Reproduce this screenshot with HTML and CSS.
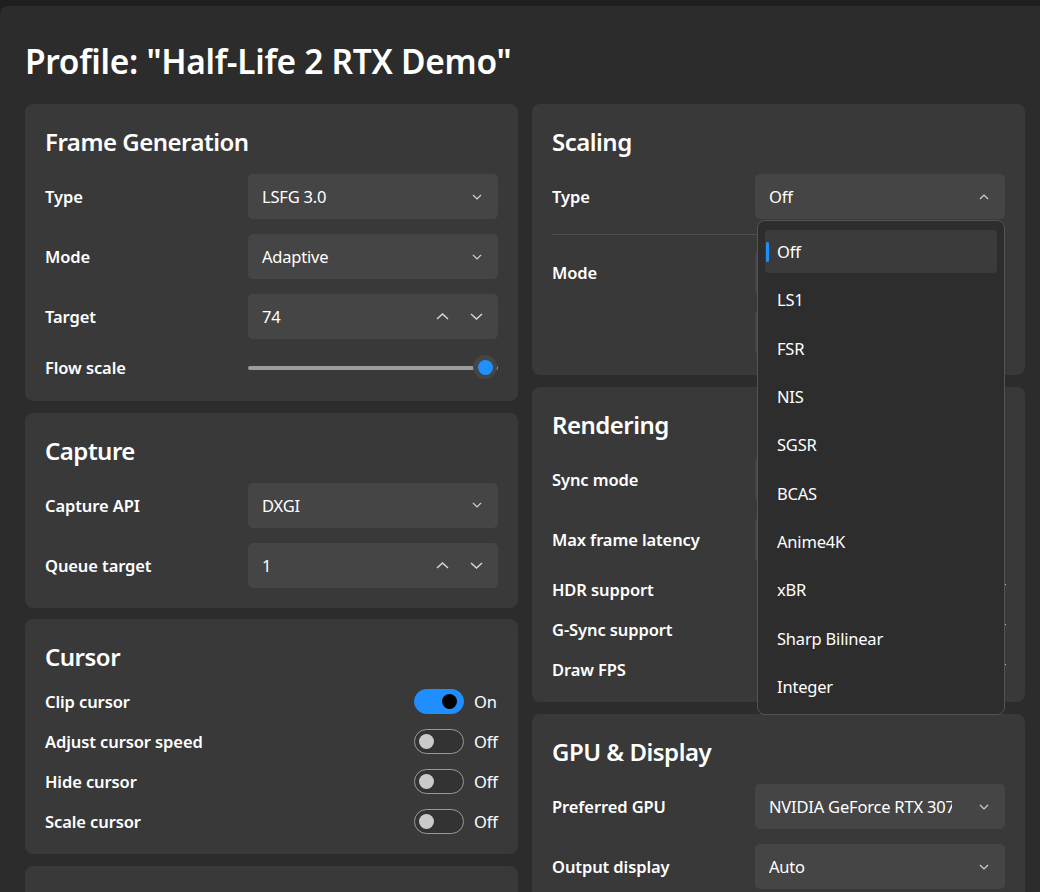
FILE: index.html
```html
<!DOCTYPE html>
<html lang="en">
<head>
<meta charset="utf-8">
<title>Profile</title>
<link rel="stylesheet" href="styles.css">
</head>
<body>
<div class="app">
  <h1 class="title">Profile: "Half-Life 2 RTX Demo"</h1>
  <div class="columns">
    <div class="col">
      <section class="card">
        <h2>Frame Generation</h2>
        <div class="rows">
          <div class="row"><span class="label">Type</span>
            <div class="select"><span class="value">LSFG 3.0</span>
              <svg class="chev" viewBox="0 0 10 6"><path d="M1 1L5 5L9 1"/></svg></div></div>
          <div class="row"><span class="label">Mode</span>
            <div class="select"><span class="value">Adaptive</span>
              <svg class="chev" viewBox="0 0 10 6"><path d="M1 1L5 5L9 1"/></svg></div></div>
          <div class="row"><span class="label">Target</span>
            <div class="select number"><span class="value">74</span>
              <svg class="chev big" viewBox="0 0 13 7"><path d="M1 6L6.5 1L12 6"/></svg>
              <svg class="chev big" viewBox="0 0 13 7"><path d="M1 1L6.5 6L12 1"/></svg></div></div>
          <div class="row slim"><span class="label">Flow scale</span>
            <div class="slider"><div class="track"></div><div class="thumb"><span></span></div></div></div>
        </div>
      </section>
      <section class="card">
        <h2>Capture</h2>
        <div class="rows">
          <div class="row"><span class="label">Capture API</span>
            <div class="select"><span class="value">DXGI</span>
              <svg class="chev" viewBox="0 0 10 6"><path d="M1 1L5 5L9 1"/></svg></div></div>
          <div class="row"><span class="label">Queue target</span>
            <div class="select number"><span class="value">1</span>
              <svg class="chev big" viewBox="0 0 13 7"><path d="M1 6L6.5 1L12 6"/></svg>
              <svg class="chev big" viewBox="0 0 13 7"><path d="M1 1L6.5 6L12 1"/></svg></div></div>
        </div>
      </section>
      <section class="card">
        <h2>Cursor</h2>
        <div class="rows">
          <div class="row toggle-row"><span class="label">Clip cursor</span>
            <div class="switch-wrap"><span class="switch on"><span class="knob"></span></span><span class="state">On</span></div></div>
          <div class="row toggle-row"><span class="label">Adjust cursor speed</span>
            <div class="switch-wrap"><span class="switch"><span class="knob"></span></span><span class="state">Off</span></div></div>
          <div class="row toggle-row"><span class="label">Hide cursor</span>
            <div class="switch-wrap"><span class="switch"><span class="knob"></span></span><span class="state">Off</span></div></div>
          <div class="row toggle-row"><span class="label">Scale cursor</span>
            <div class="switch-wrap"><span class="switch"><span class="knob"></span></span><span class="state">Off</span></div></div>
        </div>
      </section>
      <section class="card">
        <h2>Miscellaneous</h2>
      </section>
    </div>
    <div class="col">
      <section class="card">
        <h2>Scaling</h2>
        <div class="rows">
          <div class="row"><span class="label">Type</span>
            <div class="select open"><span class="value">Off</span>
              <svg class="chev" viewBox="0 0 10 6"><path d="M1 5L5 1L9 5"/></svg>
              <ul class="popup">
                <li class="item selected">Off</li>
                <li class="item">LS1</li>
                <li class="item">FSR</li>
                <li class="item">NIS</li>
                <li class="item">SGSR</li>
                <li class="item">BCAS</li>
                <li class="item">Anime4K</li>
                <li class="item">xBR</li>
                <li class="item">Sharp Bilinear</li>
                <li class="item">Integer</li>
              </ul>
            </div></div>
          <hr class="sep">
          <div class="row top"><span class="label">Mode</span>
            <div class="stack">
              <div class="select"><span class="value">Custom</span>
                <svg class="chev" viewBox="0 0 10 6"><path d="M1 1L5 5L9 1"/></svg></div>
              <div class="select number"><span class="value">1.00</span>
                <svg class="chev big" viewBox="0 0 13 7"><path d="M1 6L6.5 1L12 6"/></svg>
                <svg class="chev big" viewBox="0 0 13 7"><path d="M1 1L6.5 6L12 1"/></svg></div>
            </div></div>
        </div>
      </section>
      <section class="card">
        <h2>Rendering</h2>
        <div class="rows">
          <div class="row"><span class="label">Sync mode</span>
            <div class="select"><span class="value">Default</span>
              <svg class="chev" viewBox="0 0 10 6"><path d="M1 1L5 5L9 1"/></svg></div></div>
          <div class="row"><span class="label">Max frame latency</span>
            <div class="select number"><span class="value">1</span>
              <svg class="chev big" viewBox="0 0 13 7"><path d="M1 6L6.5 1L12 6"/></svg>
              <svg class="chev big" viewBox="0 0 13 7"><path d="M1 1L6.5 6L12 1"/></svg></div></div>
          <div class="row toggle-row"><span class="label">HDR support</span>
            <div class="switch-wrap"><span class="switch"><span class="knob"></span></span><span class="state">Off</span></div></div>
          <div class="row toggle-row"><span class="label">G-Sync support</span>
            <div class="switch-wrap"><span class="switch"><span class="knob"></span></span><span class="state">Off</span></div></div>
          <div class="row toggle-row"><span class="label">Draw FPS</span>
            <div class="switch-wrap"><span class="switch"><span class="knob"></span></span><span class="state">Off</span></div></div>
        </div>
      </section>
      <section class="card">
        <h2>GPU &amp; Display</h2>
        <div class="rows">
          <div class="row"><span class="label">Preferred GPU</span>
            <div class="select"><span class="value clip">NVIDIA GeForce RTX 3070</span>
              <svg class="chev" viewBox="0 0 10 6"><path d="M1 1L5 5L9 1"/></svg></div></div>
          <div class="row"><span class="label">Output display</span>
            <div class="select"><span class="value">Auto</span>
              <svg class="chev" viewBox="0 0 10 6"><path d="M1 1L5 5L9 1"/></svg></div></div>
        </div>
      </section>
    </div>
  </div>
</div>
</body>
</html>
```

FILE: styles.css
```css
html, body {
  margin: 0;
  height: 100%;
  overflow: hidden;
}
body {
  background: #1f1f1f;
  font-family: "Noto Sans", "Open Sans", sans-serif;
  color: #ffffff;
}
.app {
  margin-top: 6px;
  height: calc(100% - 6px);
  background: #2c2c2c;
  border-top-left-radius: 8px;
  padding: 0 15px 0 25px;
  box-sizing: border-box;
  overflow: hidden;
}
.title {
  margin: 0 0 20px;
  padding-top: 33px;
  font-size: 33.5px;
  line-height: 45px;
  font-weight: 600;
  letter-spacing: -0.3px;
  white-space: nowrap;
}
.columns {
  display: grid;
  grid-template-columns: 493px 493px;
  column-gap: 14px;
}
.col {
  display: flex;
  flex-direction: column;
  gap: 12px;
}
.col:first-child {
  gap: 11.5px;
}
.card {
  background: #393939;
  border-radius: 8px;
  padding: 20px;
}
.card h2 {
  margin: 0 0 14px;
  font-size: 24px;
  line-height: 36px;
  font-weight: 600;
  letter-spacing: -0.5px;
}
.rows {
  display: flex;
  flex-direction: column;
  gap: 15px;
}
.row {
  display: flex;
  align-items: center;
  justify-content: space-between;
  height: 45px;
}
.row.slim {
  height: 27px;
}
.row.toggle-row {
  height: 25px;
}
.row.top {
  align-items: flex-start;
  height: auto;
}
.row.top .label {
  line-height: 45px;
}
.label {
  font-size: 16.5px;
  font-weight: 600;
  letter-spacing: -0.1px;
}
.select {
  position: relative;
  width: 250px;
  height: 45px;
  box-sizing: border-box;
  background: #454545;
  border-radius: 5px;
  display: flex;
  align-items: center;
  padding: 0 16px 0 14px;
  font-size: 16.5px;
  letter-spacing: -0.2px;
}
.value {
  flex: 1;
  white-space: nowrap;
  overflow: hidden;
}
.value.clip {
  margin-right: 27px;
}
.chev {
  width: 10px;
  height: 6px;
  fill: none;
  stroke: #d0d0d0;
  stroke-width: 1.2;
}
.chev.big {
  width: 13px;
  height: 7px;
  stroke-width: 1.4;
  stroke: #dadada;
}
.number .chev.big + .chev.big {
  margin-left: 21px;
}
.number {
  padding-right: 15px;
}
.stack {
  display: flex;
  flex-direction: column;
  gap: 15px;
}
.sep {
  border: 0;
  height: 1px;
  background: #4d4d4d;
  margin: 0;
}
.slider {
  position: relative;
  width: 250px;
  height: 25px;
  display: flex;
  align-items: center;
}
.track {
  width: 100%;
  height: 4px;
  border-radius: 2px;
  background: #9c9c9c;
}
.thumb {
  position: absolute;
  right: 1px;
  top: 0;
  width: 24px;
  height: 24px;
  border-radius: 50%;
  background: #454545;
  display: flex;
  align-items: center;
  justify-content: center;
}
.thumb span {
  width: 15px;
  height: 15px;
  border-radius: 50%;
  background: #2090ff;
}
.switch-wrap {
  display: flex;
  align-items: center;
  gap: 10px;
}
.switch {
  width: 50px;
  height: 25px;
  box-sizing: border-box;
  border-radius: 13px;
  border: 1.5px solid #9a9a9a;
  background: #333333;
  display: flex;
  align-items: center;
  padding-left: 4px;
}
.switch .knob {
  width: 15px;
  height: 15px;
  border-radius: 50%;
  background: #cacaca;
}
.switch.on {
  background: #1f8fff;
  border-color: #1f8fff;
  justify-content: flex-end;
  padding: 0 6px 0 0;
}
.switch.on .knob {
  background: #000;
}
.state {
  width: 24px;
  font-size: 16.5px;
  letter-spacing: -0.2px;
}
.popup {
  position: absolute;
  top: 46px;
  left: 2px;
  right: 0;
  margin: 0;
  list-style: none;
  background: #2d2d2d;
  border: 1px solid #535353;
  border-radius: 8px;
  padding: 9px 7px 6px;
  display: flex;
  flex-direction: column;
  gap: 5.33px;
  z-index: 5;
}
.item {
  position: relative;
  height: 43px;
  line-height: 43px;
  padding-left: 12px;
  border-radius: 4px;
}
.item.selected {
  background: #3b3b3b;
}
.item.selected::before {
  content: "";
  position: absolute;
  left: 1px;
  top: 12px;
  width: 3px;
  height: 20px;
  border-radius: 2px;
  background: #1f8fff;
}
```
